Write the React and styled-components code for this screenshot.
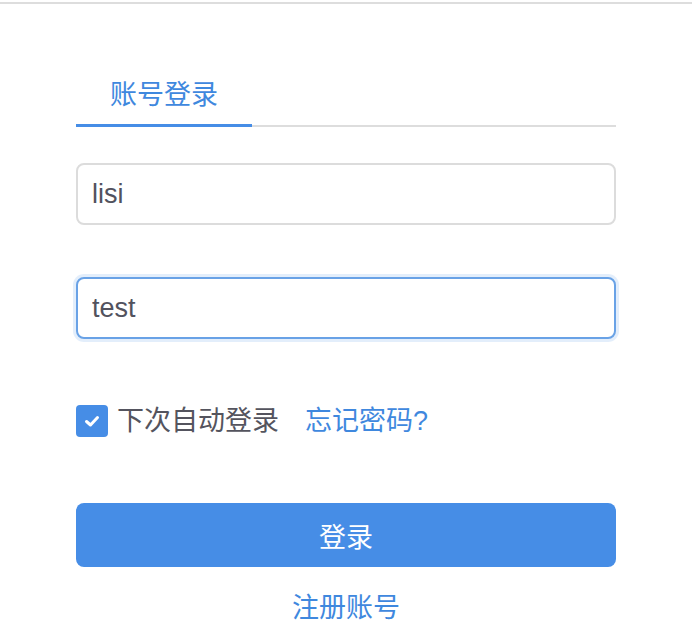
import React, {useState} from 'react';
import styled, {createGlobalStyle} from 'styled-components';

const GlobalStyle = createGlobalStyle`
    html, body {
        margin: 0;
        padding: 0;
        background: #fff;
    }
    body {
        font-family: "Liberation Sans", "Noto Sans CJK SC", sans-serif;
    }
`;

const BLUE = '#468de6';

const TopLine = styled('div')`
    height: 2px;
    margin-top: 2px;
    background: #dddddd;
`;

const Form = styled('div')`
    width: 540px;
    margin-left: 76px;
    padding-top: 71px;
`;

const Tabs = styled('div')`
    display: flex;
    border-bottom: 2px solid #dddddd;
`;

const TabItem = styled('div')`
    width: 176px;
    text-align: center;
    font-size: 27px;
    line-height: 40px;
    padding-bottom: 9px;
    margin-bottom: -2px;
    color: ${props => props.active ? '#3f88de' : '#555'};
    border-bottom: 3px solid ${props => props.active ? BLUE : 'transparent'};
`;

const Input = styled('input')`
    display: block;
    box-sizing: border-box;
    width: 100%;
    height: 62px;
    margin-top: ${props => props.gap}px;
    padding: 0 14px;
    border: 2px solid ${props => props.focused ? '#69a2e6' : '#dcdcdc'};
    border-radius: 8px;
    font-family: "Liberation Sans", "Noto Sans CJK SC", sans-serif;
    font-size: 27px;
    color: #52525e;
    outline: none;
    box-shadow: ${props => props.focused ? '0 0 0 3px rgba(70, 141, 230, 0.15)' : 'none'};
`;

const Row = styled('div')`
    display: flex;
    align-items: center;
    margin-top: 65px;
    height: 34px;
`;

const Check = styled('span')`
    display: flex;
    align-items: center;
    justify-content: center;
    width: 32px;
    height: 32px;
    border-radius: 4px;
    background: ${props => props.checked ? BLUE : '#fff'};
    border: ${props => props.checked ? 'none' : '2px solid #ccc'};
    cursor: pointer;
`;

const Label = styled('span')`
    margin-left: 9px;
    font-size: 27px;
    line-height: 34px;
    color: #54545e;
`;

const Link = styled('a')`
    font-size: 27px;
    line-height: 34px;
    color: #3f88de;
    text-decoration: none;
    margin-left: ${props => props.offset || 0}px;
`;

const Button = styled('button')`
    display: block;
    width: 100%;
    height: 64px;
    margin-top: 65px;
    border: none;
    border-radius: 8px;
    background: ${BLUE};
    color: #fff;
    font-family: "Liberation Sans", "Noto Sans CJK SC", sans-serif;
    font-size: 27px;
`;

const Register = styled('div')`
    margin-top: 23px;
    text-align: center;
    font-size: 27px;
    line-height: 36px;
    color: #3f88de;
`;

const App = () => {
    const [user, setUser] = useState('lisi');
    const [pass, setPass] = useState('test');
    const [remember, setRemember] = useState(true);

    return (
        <>
            <GlobalStyle/>
            <TopLine/>
            <Form>
                <Tabs>
                    <TabItem active>账号登录</TabItem>
                </Tabs>
                <Input gap={36} value={user} onChange={e => setUser(e.target.value)}/>
                <Input gap={52} focused value={pass} onChange={e => setPass(e.target.value)}/>
                <Row>
                    <Check checked={remember} onClick={() => setRemember(!remember)}>
                        {remember &&
                            <svg width="18" height="18" viewBox="0 0 18 18">
                                <path d="M3.5 9.5 L7.5 13 L14.5 5.5" fill="none" stroke="#fff"
                                      strokeWidth="3" strokeLinecap="round" strokeLinejoin="round"/>
                            </svg>
                        }
                    </Check>
                    <Label>下次自动登录</Label>
                    <Link href="#" offset={26}>忘记密码?</Link>
                </Row>
                <Button>登录</Button>
                <Register>注册账号</Register>
            </Form>
        </>
    );
};

export default App;
